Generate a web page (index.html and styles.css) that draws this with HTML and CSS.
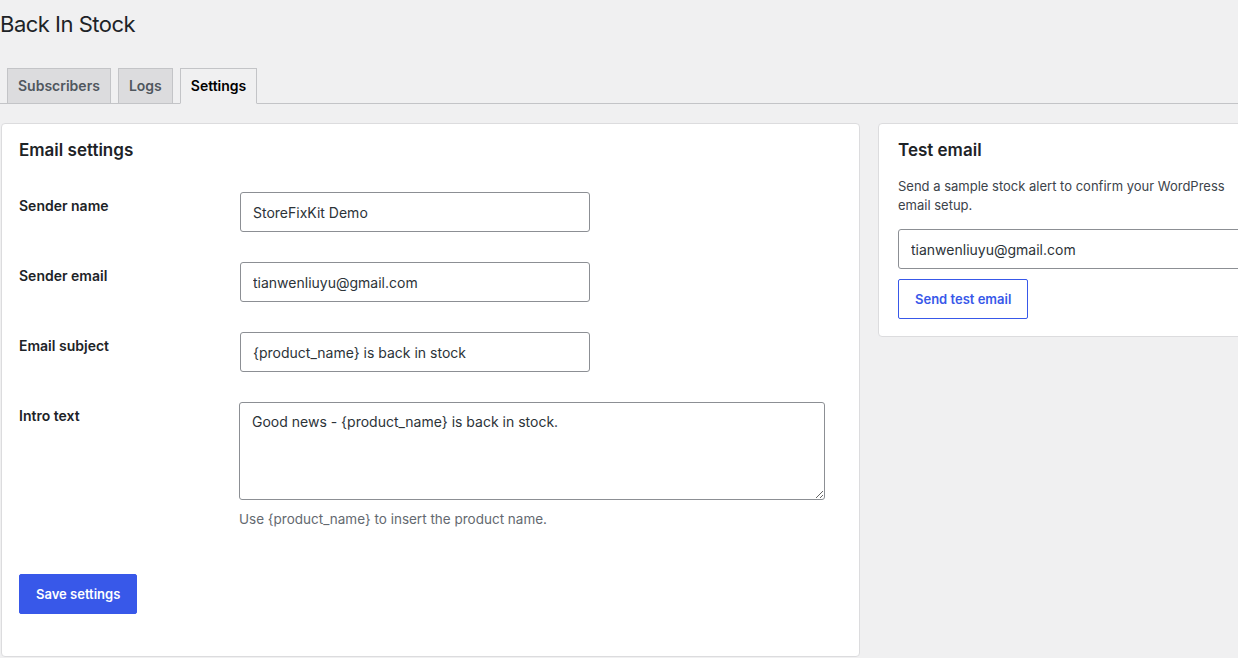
FILE: index.html
```html
<!DOCTYPE html>
<html>
  <head>
    <title>Back In Stock</title>
    <link rel="stylesheet" href="styles.css">
  </head>
  <body>
    <div class="wrap">
      <h1>Back In Stock</h1>

      <nav class="nav-tab-wrapper">
        <a href="#" class="nav-tab">Subscribers</a>
        <a href="#" class="nav-tab">Logs</a>
        <a href="#" class="nav-tab nav-tab-active">Settings</a>
      </nav>

      <div class="layout">
        <div class="card card-main">
          <h2>Email settings</h2>

          <form class="form-table">
            <div class="field-row">
              <label for="sender-name">Sender name</label>
              <div class="field">
                <input id="sender-name" class="regular-text" type="text" value="StoreFixKit Demo">
              </div>
            </div>
            <div class="field-row">
              <label for="sender-email">Sender email</label>
              <div class="field">
                <input id="sender-email" class="regular-text" type="email" value="tianwenliuyu@gmail.com">
              </div>
            </div>
            <div class="field-row">
              <label for="email-subject">Email subject</label>
              <div class="field">
                <input id="email-subject" class="regular-text" type="text" value="{product_name} is back in stock">
              </div>
            </div>
            <div class="field-row">
              <label for="intro-text">Intro text</label>
              <div class="field">
                <textarea id="intro-text" class="large-text">Good news - {product_name} is back in stock.</textarea>
                <p class="description">Use {product_name} to insert the product name.</p>
              </div>
            </div>

            <p class="submit">
              <button type="button" class="button-primary">Save settings</button>
            </p>
          </form>
        </div>

        <div class="card card-side">
          <h2>Test email</h2>
          <p class="side-text">Send a sample stock alert to confirm your WordPress email setup.</p>
          <input class="wide-text" type="email" value="tianwenliuyu@gmail.com">
          <button type="button" class="button-secondary">Send test email</button>
        </div>
      </div>
    </div>
  </body>
</html>
```

FILE: styles.css
```css
html {
  overflow: hidden;
}
body {
  margin: 0;
  background-color: #f0f0f1;
  color: #3c434a;
  font-family: Inter, "Noto Sans", sans-serif;
  font-size: 13px;
}
.wrap {
  width: 1300px;
}
h1 {
  margin: 0;
  padding: 9px 0 4px;
  font-size: 22px;
  font-weight: 400;
  letter-spacing: -0.5px;
  line-height: 30px;
  color: #1d2327;
}
.nav-tab-wrapper {
  display: flex;
  margin-top: 25px;
  border-bottom: 1px solid #c3c4c7;
}
.nav-tab {
  margin-left: 7px;
  margin-bottom: -1px;
  padding: 5px 10px;
  border: 1px solid #c3c4c7;
  background-color: #dcdcde;
  color: #50575e;
  font-size: 14px;
  font-weight: 600;
  line-height: 24px;
  text-decoration: none;
}
.nav-tab-active {
  background-color: #f0f0f1;
  border-bottom-color: #f0f0f1;
  color: #000;
}
.layout {
  display: grid;
  grid-template-columns: 859px 400px;
  gap: 18px;
  align-items: start;
  margin: 19px 0 0 1px;
}
.card {
  background-color: #fff;
  border: 1px solid #dcdcde;
  border-radius: 4px;
}
.card h2 {
  margin: 0;
  font-size: 17px;
  font-weight: 600;
  line-height: 22px;
  color: #1d2327;
}
.card-main {
  padding: 15px 17px 42px;
}
.card-side {
  padding: 15px 19px 17px;
}
.form-table {
  margin-top: 16px;
}
.field-row {
  display: grid;
  grid-template-columns: 220px 1fr;
  padding: 15px 0;
}
.field-row label {
  padding-top: 5px;
  font-size: 14px;
  font-weight: 600;
  line-height: 18px;
  color: #1d2327;
}
.field {
  display: flex;
  flex-direction: column;
  align-items: flex-start;
}
input,
textarea {
  box-sizing: border-box;
  margin: 0;
  border: 1px solid #8c8f94;
  border-radius: 3px;
  background-color: #fff;
  color: #2c3338;
  font-family: inherit;
  font-size: 14px;
}
input {
  height: 40px;
  padding: 0 12px;
}
.regular-text {
  width: 350px;
  margin-left: 1px;
}
.large-text {
  width: 586px;
  height: 98px;
  padding: 9px 12px;
  line-height: 20px;
  resize: vertical;
}
.description {
  margin: 9px 0 0;
  color: #646970;
  font-size: 13.5px;
  line-height: 20px;
}
.submit {
  margin: 30px 0 0;
}
.button-primary,
.button-secondary {
  box-sizing: border-box;
  height: 40px;
  padding: 0 16px;
  border-radius: 2px;
  font-family: inherit;
  font-size: 13px;
  font-weight: 600;
  cursor: pointer;
}
.button-primary {
  border: 1px solid #3858e9;
  background-color: #3858e9;
  color: #fff;
}
.button-secondary {
  display: block;
  margin-top: 10px;
  border: 1px solid #3858e9;
  background-color: #fff;
  color: #3858e9;
}
.side-text {
  max-width: 335px;
  margin: 16px 0 0;
  line-height: 19px;
}
.wide-text {
  display: block;
  width: 100%;
  margin-top: 14px;
}
```
